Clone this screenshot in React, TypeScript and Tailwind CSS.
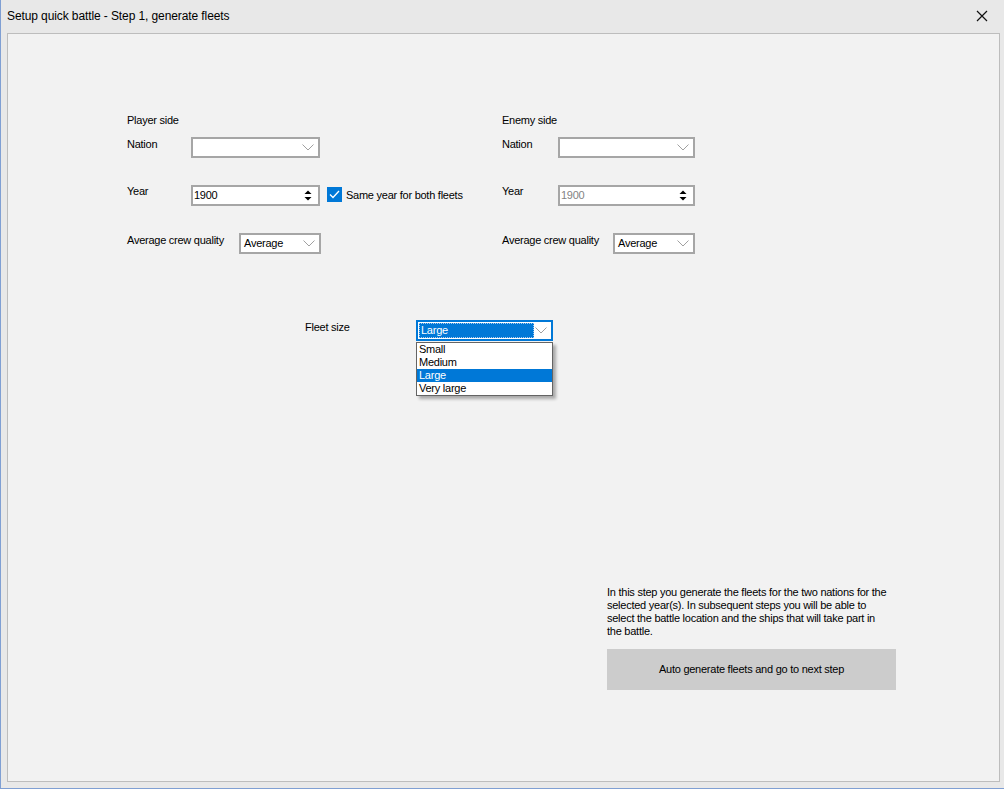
const ui = { fontFamily: '"Liberation Sans", Arial, sans-serif' };

function Chevron() {
  return (
    <svg width="12" height="7" viewBox="0 0 12 7" className="shrink-0">
      <path d="M0.5 0.5 L6 6 L11.5 0.5" fill="none" stroke="#a0a0a0" strokeWidth="1" />
    </svg>
  );
}

function Combo({ width, value }: { width: number; value?: string }) {
  return (
    <div
      className="flex h-[21px] items-center justify-between border-2 border-[#a6a6a6] bg-white pl-[3px] pr-[4px] text-[11px] text-black"
      style={{ width }}
    >
      <span>{value ?? ""}</span>
      <Chevron />
    </div>
  );
}

function Arrows() {
  return (
    <svg width="8" height="13" viewBox="0 0 8 13">
      <path d="M0.5 5 L4 1.5 L7.5 5 Z" fill="#000" />
      <path d="M0.5 8 L4 11.5 L7.5 8 Z" fill="#000" />
    </svg>
  );
}

function Spinner({ value, width, disabled }: { value: string; width: number; disabled?: boolean }) {
  return (
    <div
      className="flex h-[21px] items-center justify-between border-2 border-[#a6a6a6] bg-white pl-[1px] pr-[6px] text-[11px]"
      style={{ width }}
    >
      <span className={disabled ? "text-[#838383]" : "text-black"}>{value}</span>
      <Arrows />
    </div>
  );
}

function Side({
  title,
  labelW,
  comboW,
  avgLabelW,
  yearDisabled,
  checkbox,
}: {
  title: string;
  labelW: number;
  comboW: number;
  avgLabelW: number;
  yearDisabled?: boolean;
  checkbox?: boolean;
}) {
  return (
    <div className="flex flex-col text-[11px] leading-[13px] text-black">
      <div className="pt-[1px]">{title}</div>
      <div className="mt-[10px] flex items-start">
        <div className="pt-[1px]" style={{ width: labelW }}>
          Nation
        </div>
        <Combo width={comboW} />
      </div>
      <div className="mt-[27px] flex items-start">
        <div style={{ width: labelW }}>Year</div>
        <Spinner value="1900" width={comboW} disabled={yearDisabled} />
        {checkbox && (
          <div className="ml-[7px] mt-[2px] flex items-center gap-[4px]">
            <div className="flex h-[15px] w-[15px] items-center justify-center bg-[#0078d7]">
              <svg width="11" height="9" viewBox="0 0 11 9">
                <path d="M1 4.5 L4 7.5 L10 1" fill="none" stroke="#fff" strokeWidth="1.3" />
              </svg>
            </div>
            <span className="pt-[1px]">Same year for both fleets</span>
          </div>
        )}
      </div>
      <div className="mt-[27px] flex items-start">
        <div className="pt-[1px]" style={{ width: avgLabelW }}>
          Average crew quality
        </div>
        <Combo width={82} value="Average" />
      </div>
    </div>
  );
}

export default function App() {
  const options = ["Small", "Medium", "Large", "Very large"];
  return (
    <div
      className="flex h-[789px] w-[1004px] flex-col overflow-hidden border-b border-l border-[#7f9fd3] bg-[#f0f0f0]"
      style={ui}
    >
      <div className="flex h-[33px] shrink-0 items-center justify-between bg-[#e8e8e8] pl-[6px] pr-[16px]">
        <span className="pb-[2px] text-[12px] tracking-[-0.1px] text-black">
          Setup quick battle - Step 1, generate fleets
        </span>
        <svg width="12" height="12" viewBox="0 0 12 12" className="mb-[2px]">
          <path d="M1 1 L11 11 M11 1 L1 11" stroke="#111" strokeWidth="1.2" />
        </svg>
      </div>
      <div className="flex flex-1 flex-col bg-[#e8e8e8] pb-[6px] pl-[6px] pr-[4px]">
        <div className="flex flex-1 flex-col border border-[#bdbdbd] bg-[#f2f2f2] text-[11px] leading-[13px] tracking-[-0.25px] text-black">
          <div className="flex pl-[119px] pt-[79px]">
            <div className="w-[375px]">
              <Side title="Player side" labelW={64} comboW={129} avgLabelW={112} checkbox />
            </div>
            <Side title="Enemy side" labelW={56} comboW={137} avgLabelW={111} yearDisabled />
          </div>

          <div className="mt-[66px] flex items-start pl-[297px]">
            <div className="w-[111px] pt-[1px]">Fleet size</div>
            <div className="relative">
              <div className="flex h-[21px] w-[137px] items-center justify-between border-2 border-[#0078d7] bg-white pl-[1px] pr-[4px]">
                <span className="h-[15px] w-[115px] border border-dotted border-[#9ec9f0] bg-[#0078d7] pl-[1px] leading-[13px] text-white">
                  Large
                </span>
                <Chevron />
              </div>
              <div className="absolute left-0 top-[22px] z-10 w-[137px] border border-[#646464] bg-white shadow-[3px_3px_3px_rgba(0,0,0,0.3)]">
                {options.map((o) => (
                  <div
                    key={o}
                    className={
                      "h-[13px] pl-[2px] leading-[13px] " +
                      (o === "Large" ? "bg-[#0078d7] text-white" : "text-black")
                    }
                  >
                    {o}
                  </div>
                ))}
              </div>
            </div>
          </div>

          <div className="mt-[245px] pl-[599px]">
            <p className="w-[292px] whitespace-nowrap">
              In this step you generate the fleets for the two nations for the
              <br />
              selected year(s). In subsequent steps you will be able to
              <br />
              select the battle location and the ships that will take part in
              <br />
              the battle.
            </p>
            <button className="mt-[11px] flex h-[41px] w-[289px] items-center justify-center bg-[#cccccc] text-[11px] text-black">
              Auto generate fleets and go to next step
            </button>
          </div>
        </div>
      </div>
    </div>
  );
}
